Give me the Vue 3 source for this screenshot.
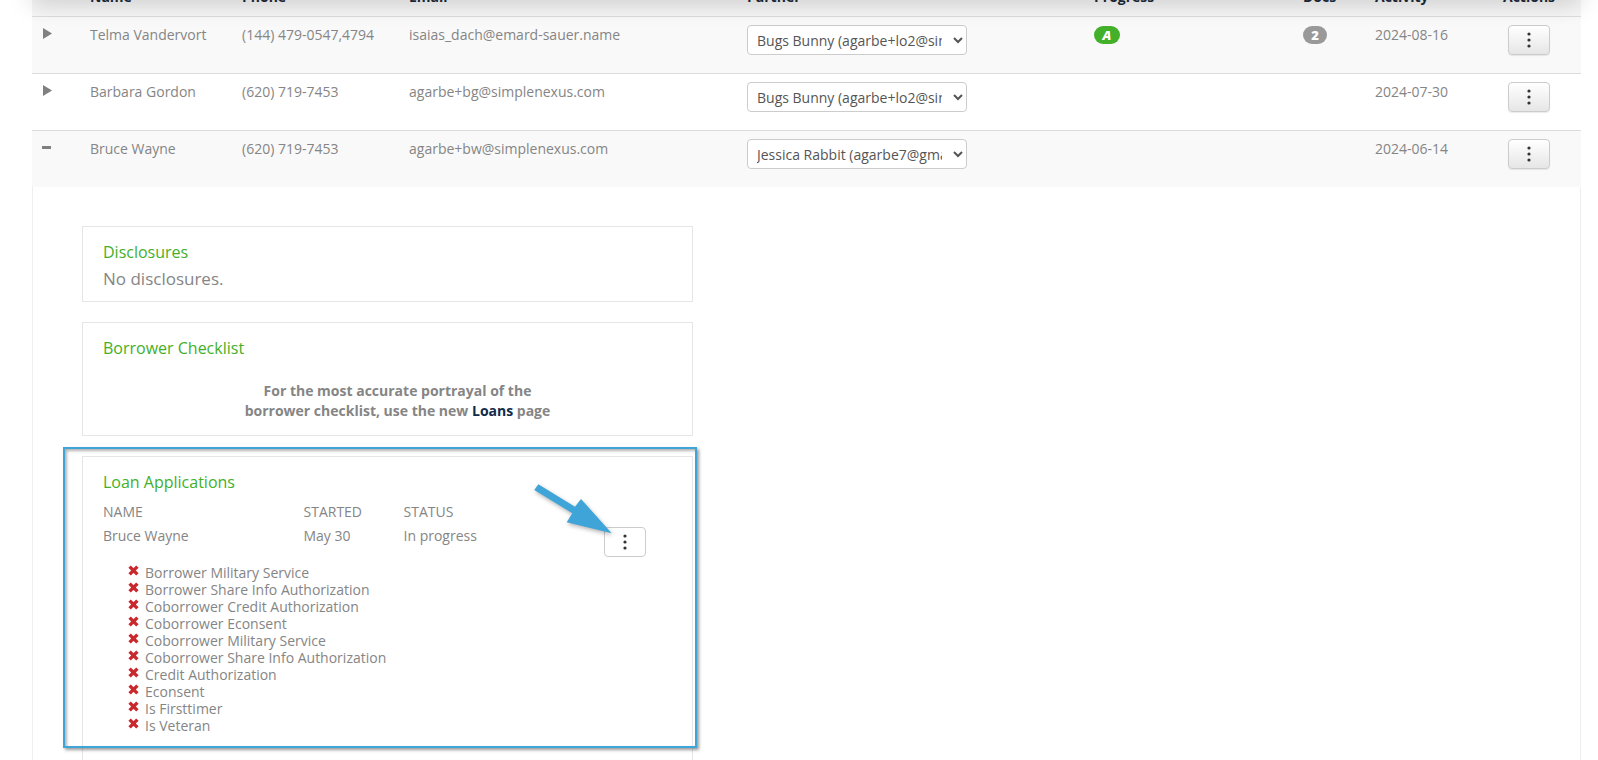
<template>
  <div class="page">
    <div class="headShadow"></div>
    <div class="tbl">
      <div class="row head">
        <span></span>
        <span v-for="h in headers" :key="h" class="headCell">{{ h }}</span>
      </div>
      <div
        v-for="(r, idx) in rows"
        :key="r.name"
        class="row"
        :class="{ odd: idx !== 1 }"
      >
        <div class="toggle">
          <svg v-if="r.open" width="12" height="12" viewBox="0 0 12 12"><rect x="0" y="4" width="9" height="3" fill="#808080" /></svg>
          <svg v-else width="12" height="12" viewBox="0 0 12 12"><path d="M1 0 L10 5.5 L1 11 Z" fill="#808080" /></svg>
        </div>
        <div>{{ r.name }}</div>
        <div>{{ r.phone }}</div>
        <div>{{ r.email }}</div>
        <div>
          <select class="partner">
            <option>{{ r.partner }}</option>
          </select>
        </div>
        <div><span v-if="r.progress" class="badge green"><i>A</i></span></div>
        <div><span v-if="r.docs" class="badge grey">{{ r.docs }}</span></div>
        <div>{{ r.activity }}</div>
        <div>
          <button class="dotsBtn">
            <svg width="4" height="16" viewBox="0 0 4 16"><circle cx="2" cy="2" r="1.6" /><circle cx="2" cy="8" r="1.6" /><circle cx="2" cy="14" r="1.6" /></svg>
          </button>
        </div>
      </div>

      <div class="detail">
        <section class="panel disclosures">
          <h3>Disclosures</h3>
          <p class="none">No disclosures.</p>
        </section>

        <section class="panel checklist">
          <h3>Borrower Checklist</h3>
          <p class="note">
            For the most accurate portrayal of the<br />
            borrower checklist, use the new <a>Loans</a> page
          </p>
        </section>

        <section class="panel loans">
          <h3>Loan Applications</h3>
          <div class="loanGrid">
            <span>NAME</span><span>STARTED</span><span>STATUS</span>
            <span>Bruce Wayne</span><span>May 30</span><span>In progress</span>
          </div>
          <button class="dotsBtn plain">
            <svg width="4" height="16" viewBox="0 0 4 16"><circle cx="2" cy="2" r="1.6" /><circle cx="2" cy="8" r="1.6" /><circle cx="2" cy="14" r="1.6" /></svg>
          </button>
          <ul>
            <li v-for="t in tasks" :key="t">
              <svg width="11" height="11" viewBox="0 0 11 11"><path d="M1.6 1.6 L9.4 9.4 M9.4 1.6 L1.6 9.4" stroke="#c9282d" stroke-width="3.4" /></svg>
              {{ t }}
            </li>
          </ul>
        </section>
      </div>
    </div>

    <!-- anotacion azul encima de la captura -->
    <div class="callout"></div>
    <svg class="arrow" width="100" height="70" viewBox="0 0 100 70">
      <path d="M4.3 9 L8.3 3.3 L45 25.7 L51 18 L81.7 52.3 L36.7 41.3 L42.3 32.3 Z" fill="#3fa5d8" />
    </svg>
  </div>
</template>

<script setup>
const headers = ["Name", "Phone", "Email", "Partner", "Progress", "Docs", "Activity", "Actions"];

const rows = [
  {
    name: "Telma Vandervort",
    phone: "(144) 479-0547,4794",
    email: "isaias_dach@emard-sauer.name",
    partner: "Bugs Bunny (agarbe+lo2@simplenexus.com)",
    progress: true,
    docs: 2,
    activity: "2024-08-16",
  },
  {
    name: "Barbara Gordon",
    phone: "(620) 719-7453",
    email: "agarbe+bg@simplenexus.com",
    partner: "Bugs Bunny (agarbe+lo2@simplenexus.com)",
    activity: "2024-07-30",
  },
  {
    name: "Bruce Wayne",
    phone: "(620) 719-7453",
    email: "agarbe+bw@simplenexus.com",
    partner: "Jessica Rabbit (agarbe7@gmail.com)",
    activity: "2024-06-14",
    open: true,
  },
];

const tasks = [
  "Borrower Military Service",
  "Borrower Share Info Authorization",
  "Coborrower Credit Authorization",
  "Coborrower Econsent",
  "Coborrower Military Service",
  "Coborrower Share Info Authorization",
  "Credit Authorization",
  "Econsent",
  "Is Firsttimer",
  "Is Veteran",
];
</script>

<style>
html, body { background: #fff; }
</style>

<style scoped>
.page{
  position: relative;
  height: 760px;
  overflow: hidden;
  background: #fff;
  font-family: "Open Sans", sans-serif;
  font-size: 14px;
  line-height: 20px;
  color: #858585;
}

.headShadow{
  position: absolute;
  top: -12px;
  left: 32px;
  right: 17px;
  height: 12px;
  box-shadow: 0 0 24px rgba(0,0,0,0.3);
  z-index: 2;
}

.tbl{
  margin: 0 17px 0 32px;
}

.row{
  display: grid;
  grid-template-columns: 58px 152px 167px 338px 347px 209px 72px 128px 1fr;
  grid-template-rows: 48px;
  height: 57px;
  padding-top: 8px;
  box-sizing: border-box;
  border-top: 1px solid #ddd;
}

.row.odd{ background: #f9f9f9; }

.row.head{
  grid-template-rows: 16px;
  height: 16px;
  padding: 0;
  border: 0;
  align-items: end;
  overflow: hidden;
  background: #f6f6f6;
}

.headCell{
  font-weight: 700;
  color: #1b2a3a;
  line-height: 20px;
  margin-bottom: 9px;
}

.toggle{
  padding: 3px 0 0 10px;
}

.toggle svg{ display: block; }

.partner{
  width: 220px;
  height: 30px;
  padding: 0 8px 0 5px;
  background: #fff;
  border: 1px solid #ccc;
  border-radius: 4px;
  font-family: inherit;
  font-size: 14px;
  color: #555;
}

.badge{
  display: inline-flex;
  align-items: center;
  justify-content: center;
  height: 18px;
  margin-top: 1px;
  border-radius: 10px;
  color: #fff;
  font-size: 13px;
  font-weight: 800;
  line-height: 18px;
}

.badge.green{ width: 26px; background: #43b02a; }
.badge.grey{ width: 24px; background: #999; }

.dotsBtn{
  display: flex;
  align-items: center;
  justify-content: center;
  width: 42px;
  height: 30px;
  margin-left: 5px;
  padding: 0;
  border: 1px solid #ccc;
  border-radius: 4px;
  background: linear-gradient(#fff, #e6e6e6);
  box-shadow: 0 1px 1px rgba(0,0,0,0.08);
  fill: #333;
}

.detail{
  padding: 39px 0 0 49px;
  border-left: 1px solid #eee;
  border-right: 1px solid #eee;
}

.panel{
  position: relative;
  width: 611px;
  box-sizing: border-box;
  margin-bottom: 20px;
  padding: 14px 20px 0;
  border: 1px solid #e6e6e6;
}

.panel h3{
  margin: 0;
  font-size: 16px;
  font-weight: 400;
  line-height: 22px;
  color: #43b02a;
}

.disclosures{ height: 76px; }
.checklist{ height: 114px; }
.loans{ height: 400px; }

.none{
  margin: 5px 0 0;
  font-size: 17px;
  line-height: 22px;
}

.note{
  margin: 22px 0 0 20px;
  text-align: center;
  font-weight: 700;
  font-size: 14px;
  line-height: 20px;
}

.note a{ color: #0f2a4a; }

.loanGrid{
  display: grid;
  grid-template-columns: 200.5px 100px 1fr;
  row-gap: 4px;
  margin-top: 9px;
}

.dotsBtn.plain{
  position: absolute;
  top: 70px;
  left: 521px;
  margin: 0;
  background: #fff;
  box-shadow: none;
}

ul{
  list-style: none;
  margin: 18px 0 0;
  padding: 0 0 0 25px;
  line-height: 17px;
}

li{
  display: flex;
  align-items: center;
  gap: 6px;
}

li svg{
  flex: none;
  margin-top: -4px;
}

.callout{
  position: absolute;
  left: 63px;
  top: 447px;
  width: 634px;
  height: 301px;
  box-sizing: border-box;
  border: 2.5px solid #3fa5d8;
  box-shadow: 2px 2px 3px rgba(0,0,0,0.4), inset 2px 2px 3px rgba(0,0,0,0.3);
  z-index: 3;
}

.arrow{
  position: absolute;
  left: 530px;
  top: 481px;
  z-index: 4;
  filter: drop-shadow(1px 2px 2px rgba(0,0,0,0.3));
}
</style>
